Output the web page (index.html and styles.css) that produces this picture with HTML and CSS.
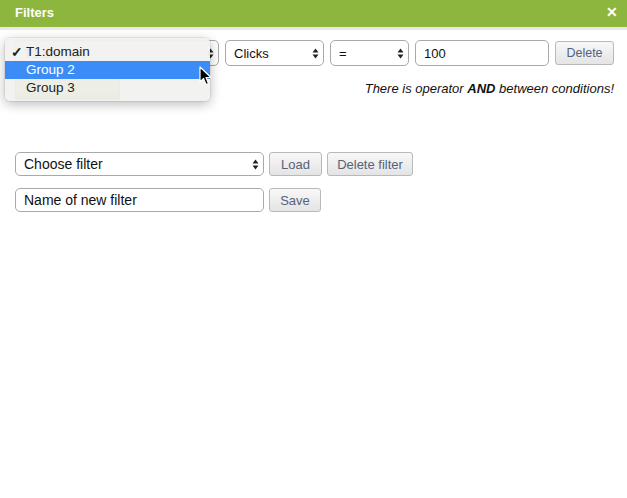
FILE: index.html
```html
<!DOCTYPE html>
<html lang="en">
<head>
    <meta charset="UTF-8">
    <title>Filters</title>
    <link rel="stylesheet" href="styles.css">
</head>
<body>
    <div class="header">
        <span class="title">Filters</span>
        <span class="close">&#10005;</span>
    </div>

    <div class="content">
        <!-- condition row -->
        <div class="row condition">
            <span class="select-wrap w-field">
                <select><option>T1:domain</option></select>
                <svg class="arrows" width="7" height="11" viewBox="0 0 7 11"><path d="M0.5 4.5 L3.5 0.5 L6.5 4.5 Z M0.5 6.5 L3.5 10.5 L6.5 6.5 Z" fill="#222"/></svg>
            </span>
            <span class="select-wrap w-metric">
                <select><option>Clicks</option></select>
                <svg class="arrows" width="7" height="11" viewBox="0 0 7 11"><path d="M0.5 4.5 L3.5 0.5 L6.5 4.5 Z M0.5 6.5 L3.5 10.5 L6.5 6.5 Z" fill="#222"/></svg>
            </span>
            <span class="select-wrap w-op">
                <select><option>=</option></select>
                <svg class="arrows" width="7" height="11" viewBox="0 0 7 11"><path d="M0.5 4.5 L3.5 0.5 L6.5 4.5 Z M0.5 6.5 L3.5 10.5 L6.5 6.5 Z" fill="#222"/></svg>
            </span>
            <input class="text-input w-value" type="text" value="100">
            <button class="btn">Delete</button>

            <!-- open dropdown of the first select -->
            <div class="popup">
                <div class="item"><span class="check">&#10003;</span>T1:domain</div>
                <div class="item active">Group 2</div>
                <div class="item">Group 3</div>
            </div>
            <svg class="cursor" width="13" height="20" viewBox="0 0 13 20">
                <path d="M1 1 L1 16 L4.5 12.5 L7 18.5 L9.5 17.5 L7 11.5 L12 11.5 Z" fill="#000" stroke="#fff" stroke-width="1.2" stroke-linejoin="round"/>
            </svg>
        </div>

        <div class="row between">
            <!-- green add button, hidden under the open list -->
            <button class="btn btn-add" aria-label="Add condition"></button>
            <span class="note">There is operator <b>AND</b> between conditions!</span>
        </div>

        <!-- saved filters -->
        <div class="row saved">
            <span class="select-wrap w-long">
                <select class="small"><option>Choose filter</option></select>
                <svg class="arrows" width="7" height="11" viewBox="0 0 7 11"><path d="M0.5 4.5 L3.5 0.5 L6.5 4.5 Z M0.5 6.5 L3.5 10.5 L6.5 6.5 Z" fill="#222"/></svg>
            </span>
            <button class="btn w-load">Load</button>
            <button class="btn w-delfilter">Delete filter</button>
        </div>

        <div class="row saved2">
            <input class="text-input small w-long" type="text" value="Name of new filter">
            <button class="btn w-save">Save</button>
        </div>
    </div>
</body>
</html>
```

FILE: styles.css
```css
* {
    margin: 0;
    padding: 0;
    box-sizing: border-box;
}

body {
    background-color: #ffffff;
    color: #111111;
    font-family: "Liberation Sans", Arial, sans-serif;
    font-size: 13px;
}

/* Barra verde do topo */
.header {
    height: 30px;
    background-color: #8cb63d;
    border-bottom: 3px solid #e8e8e8;
    display: flex;
    justify-content: space-between;
    align-items: center;
    padding: 0 9px 0 15px;
    color: #ffffff;
}

.header .title {
    font-weight: bold;
    font-size: 13px;
    margin-top: -3px;
}

.header .close {
    font-weight: bold;
    font-size: 14px;
    margin-top: -3px;
}

.content {
    padding: 10px 13px 0 15px;
}

.row {
    display: flex;
    align-items: center;
    gap: 6px;
}

.condition {
    position: relative;
}

.between {
    justify-content: space-between;
    margin-top: 11px;
}

.saved {
    margin-top: 52px;
    gap: 5px;
}

.saved2 {
    margin-top: 12px;
    gap: 5px;
}

/* Campos */
.select-wrap {
    position: relative;
    display: inline-block;
}

.select-wrap select {
    appearance: none;
    -webkit-appearance: none;
    width: 100%;
    height: 26px;
    border: 1px solid #a9a9a9;
    border-radius: 5px;
    background-color: #ffffff;
    font-family: inherit;
    font-size: 13px;
    color: #111111;
    padding: 0 20px 0 8px;
}

.select-wrap select.small {
    height: 24px;
    font-size: 14px;
}

.select-wrap .arrows {
    position: absolute;
    right: 5px;
    top: 50%;
    margin-top: -5px;
    pointer-events: none;
}

.text-input {
    height: 26px;
    border: 1px solid #a9a9a9;
    border-radius: 5px;
    font-family: inherit;
    font-size: 13px;
    color: #111111;
    padding: 0 8px;
}

.text-input.small {
    height: 24px;
    font-size: 14px;
}

.w-field { width: 204px; }
.w-metric { width: 99px; }
.w-op { width: 79px; }
.w-value { width: 134px; }
.w-long { width: 249px; }
.w-load { width: 53px; }
.w-delfilter { width: 86px; }
.w-save { width: 52px; }

/* Botoes */
.btn {
    height: 24px;
    padding: 0 6px;
    border: 1px solid #b9b9b9;
    border-radius: 3px;
    background: linear-gradient(#f8f8f8, #e4e4e4);
    color: #56627a;
    font-family: inherit;
    font-size: 13px;
    cursor: pointer;
}

.condition .btn {
    width: 59px;
    height: 24px;
    font-size: 12.5px;
}

.btn-add {
    width: 105px;
    height: 23px;
    background: linear-gradient(#a6cc5c, #7fae2f);
    border-color: #5f8d1f;
    border-bottom: 2px solid #4d7a14;
}

.note {
    font-style: italic;
    font-size: 13px;
    color: #111111;
}

/* Lista aberta do select */
.popup {
    position: absolute;
    left: -10px;
    top: -2px;
    width: 205px;
    height: 63px;
    padding-top: 5px;
    background-color: rgba(241, 241, 239, 0.95);
    border-radius: 5px;
    box-shadow: 0 3px 12px rgba(0, 0, 0, 0.28), 0 0 0 1px rgba(0, 0, 0, 0.06);
}

.popup .item {
    position: relative;
    height: 18px;
    line-height: 18px;
    padding-left: 21px;
    font-size: 13.5px;
    color: #222222;
}

.popup .item.active {
    background-color: #3c8cf7;
    color: #ffffff;
}

.popup .check {
    position: absolute;
    left: 6px;
    font-size: 14px;
    font-weight: bold;
}

.cursor {
    position: absolute;
    left: 184px;
    top: 26px;
}
```
